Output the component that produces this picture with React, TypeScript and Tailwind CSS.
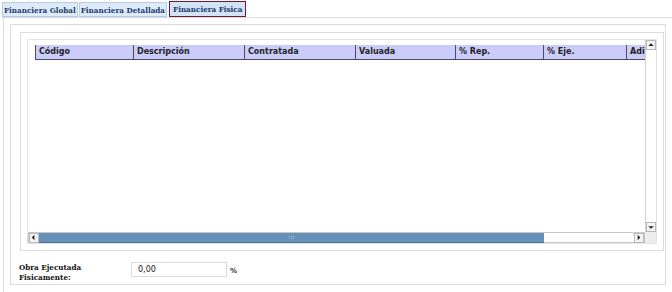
const tabs = [
  { label: "Financiera Global", active: false },
  { label: "Financiera Detallada", active: false },
  { label: "Financiera Fisica", active: true },
];

const columns = [
  { label: "Código", w: "w-[98px]" },
  { label: "Descripción", w: "w-[111px]" },
  { label: "Contratada", w: "w-[111px]" },
  { label: "Valuada", w: "w-[100px]" },
  { label: "% Rep.", w: "w-[88px]" },
  { label: "% Eje.", w: "w-[83px]" },
  { label: "Adicional", w: "w-[60px]" },
];

function Arrow({ dir }: { dir: "up" | "down" | "left" | "right" }) {
  const pts = {
    up: "1.5,5 4.5,2 7.5,5",
    down: "1.5,3 4.5,6 7.5,3",
    left: "5,1.5 2,4.5 5,7.5",
    right: "3,1.5 6,4.5 3,7.5",
  }[dir];
  return (
    <div className="w-[10px] h-[10px] flex items-center justify-center bg-[#f4f4f4] border border-[#b8b8b8]">
      <svg width="9" height="9" viewBox="0 0 9 9">
        <polygon points={pts} fill="#222" />
      </svg>
    </div>
  );
}

export default function App() {
  return (
    <div className="w-[672px] h-[292px] bg-white overflow-hidden flex flex-col">
      <div className="flex pl-[2px] pt-[1px] h-[17px] font-['DejaVu_Serif_Condensed','DejaVu_Serif',serif] font-bold text-[8px] text-[#173a6e]">
        {tabs.map((t) => (
          <div
            key={t.label}
            className={`flex items-center whitespace-nowrap ${
              t.active
                ? "border border-[#7a1630] bg-[#d3e2f5] px-[3px] ml-px"
                : "border border-[#b6cbe6] bg-[#dfeaf8] h-[15px] mt-[1px] px-[1px] mr-px"
            }`}
          >
            {t.label}
          </div>
        ))}
      </div>

      <div className="flex-1 ml-[3px] border-l border-t border-[#d5dbe4] pl-[6px] pt-[6px] pr-[6px]">
        <div className="border border-[#dcdcdc] h-[261px] pl-[9px] pt-[7px] pr-[1px] flex flex-col">
          <div className="border border-[#dcdcdc] h-[219px] p-[6px]">
            <div className="h-full border border-[#e4e4e4] flex flex-col">
              <div className="flex flex-1 min-h-0">
                <div className="flex-1 overflow-hidden pl-[7px] pt-[5px]">
                  <div className="flex font-['DejaVu_Sans',sans-serif] font-bold text-[8px] text-[#222]">
                    {columns.map((c) => (
                      <div
                        key={c.label}
                        className={`${c.w} shrink-0 h-[15px] bg-[#ccccfa] border-l border-b border-[#4a4a6a] pl-[3px] flex items-center whitespace-nowrap`}
                      >
                        {c.label}
                      </div>
                    ))}
                  </div>
                </div>
                <div className="w-[11px] flex flex-col bg-white border-l border-[#d0d0d0]">
                  <Arrow dir="up" />
                  <div className="flex-1" />
                  <Arrow dir="down" />
                </div>
              </div>
              <div className="h-[11px] flex">
                <div className="flex-1 flex items-center border border-[#c8c8c8] bg-white">
                  <Arrow dir="left" />
                  <div className="w-[505px] h-[10px] bg-[#6790b8] border-b border-[#4d6f93] flex items-center justify-center">
                    <div className="grid grid-cols-3 gap-[1px]">
                      {Array.from({ length: 6 }).map((_, i) => (
                        <div key={i} className="w-[1px] h-[1px] bg-[#a9c2dc]" />
                      ))}
                    </div>
                  </div>
                  <div className="flex-1" />
                  <Arrow dir="right" />
                </div>
                <div className="w-[11px] bg-[#ececec]" />
              </div>
            </div>
          </div>

          <div className="flex items-start mt-[11px] ml-[-1px]">
            <div className="w-[112px] font-['DejaVu_Serif_Condensed','DejaVu_Serif',serif] font-bold text-[8px] leading-[10px] text-[#111]">
              Obra Ejecutada
              <br />
              Fisicamente:
            </div>
            <div className="w-[96px] h-[15px] border border-[#dadada] bg-white pl-[6px] flex items-center font-['DejaVu_Sans',sans-serif] text-[8px] text-[#222]">
              0,00
            </div>
            <div className="ml-[3px] mt-[4px] font-['DejaVu_Sans',sans-serif] font-bold text-[7px] text-[#333]">%</div>
          </div>
        </div>
      </div>
    </div>
  );
}
